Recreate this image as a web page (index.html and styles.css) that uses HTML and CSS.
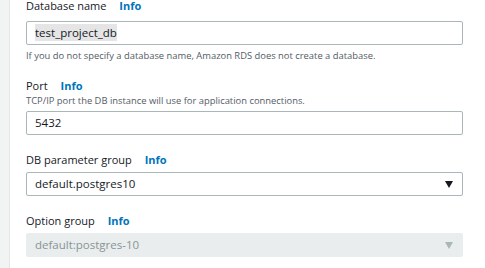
FILE: index.html
```html
<!DOCTYPE html>
<html>
<head>
<meta charset="utf-8">
<link rel="stylesheet" href="styles.css">
</head>
<body>
<div class="page">
  <div class="rail"></div>
  <div class="content">
    <div class="field f1">
      <div class="label">Database name <a class="info">Info</a></div>
      <div class="input"><span class="sel">test_project_db</span></div>
      <div class="hint after">If you do not specify a database name, Amazon RDS does not create a database.</div>
    </div>
    <div class="field f2">
      <div class="label">Port <a class="info">Info</a></div>
      <div class="hint before">TCP/IP port the DB instance will use for application connections.</div>
      <div class="input">5432</div>
    </div>
    <div class="field f3">
      <div class="label">DB parameter group <a class="info">Info</a></div>
      <div class="input select">default.postgres10<span class="caret"></span></div>
    </div>
    <div class="field f4">
      <div class="label">Option group <a class="info">Info</a></div>
      <div class="input select disabled">default:postgres-10<span class="caret"></span></div>
    </div>
  </div>
</div>
</body>
</html>
```
FILE: styles.css
```css
html, body { margin: 0; padding: 0; background: #fff; }
body { font-family: "Open Sans", "Noto Sans", sans-serif; color: #16191f; }
.page { display: flex; height: 268px; overflow: hidden; }
.rail { width: 9px; background: #f2f3f3; border-right: 1px solid #e3e6e6; flex: none; }
.content { flex: 1; padding-left: 16px; padding-right: 22px; }
.field { display: flex; flex-direction: column; }
.label { font-size: 11px; line-height: 16px; height: 16px; }
.info { color: #0073bb; font-weight: 700; margin-left: 10px; }
.hint { font-size: 9.4px; line-height: 14px; color: #545b64; }
.input {
  box-sizing: border-box; height: 24px; border: 1px solid #aab7b8; border-radius: 2px;
  font-size: 11.5px; line-height: 22px; padding-left: 8px; position: relative;
}
.sel { background: #e5e5e5; padding: 1px 0; }
.f1 { margin-top: -2px; }
.f1 .input { margin-top: 7px; }
.hint.after { margin-top: 4px; }
.f2 { margin-top: 15px; }
.f2 .input { margin-top: 3px; height: 24px; }
.f3 { margin-top: 17px; }
.f3 .input, .f4 .input { margin-top: 4px; }
.f4 { margin-top: 17px; }
.caret {
  position: absolute; right: 9px; top: 8px; width: 0; height: 0;
  border-left: 4.5px solid transparent; border-right: 4.5px solid transparent;
  border-top: 7px solid #16191f;
}
.disabled { background: #eaeded; border-color: #eaeded; color: #879596; }
.disabled .caret { border-top-color: #aab7b8; }
```
